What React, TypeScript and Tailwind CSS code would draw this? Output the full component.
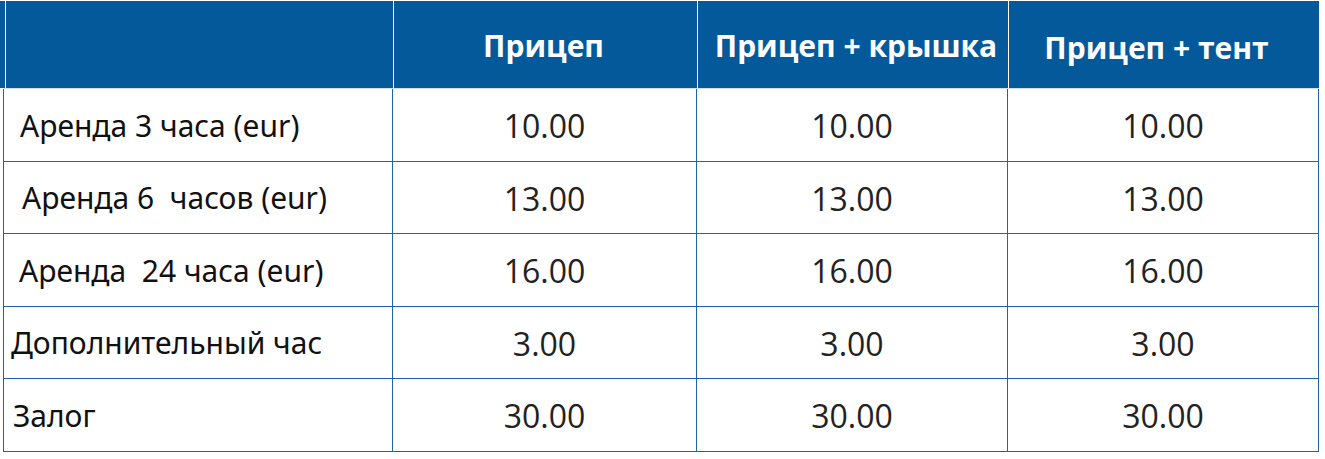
const headers = [
  { title: "Прицеп", cls: "pt-[2px] pr-[4px] border-r border-white" },
  { title: "Прицеп + крышка", cls: "pt-[2px] pl-[6px] border-r border-white" },
  { title: "Прицеп + тент", cls: "pt-[6px] pr-[16px]" },
];

const rows = [
  { label: "Аренда 3 часа (eur)", pad: "pl-[16px]", h: "h-[73px]", value: "10.00" },
  { label: "Аренда 6\u00a0 часов (eur)", pad: "pl-[18px]", h: "h-[72px]", value: "13.00" },
  { label: "Аренда\u00a0 24 часа (eur)", pad: "pl-[15px]", h: "h-[73px]", value: "16.00" },
  { label: "Дополнительный час", pad: "pl-[7px]", h: "h-[72px]", value: "3.00" },
  { label: "Залог", pad: "pl-[9px]", h: "h-[73px]", value: "30.00" },
];

export default function App() {
  return (
    <div className="min-h-screen bg-white pt-[1px]">
      <div className="w-[1319px] bg-[#03599a] pl-[5px]">
        <div className="grid h-[87px] grid-cols-[388px_304px_311px_311px] border-l border-white font-['Open_Sans',sans-serif] text-[30px] font-bold text-white">
          <div className="border-r border-white" />
          {headers.map((h) => (
            <div
              key={h.title}
              className={`flex items-center justify-center whitespace-nowrap ${h.cls}`}
            >
              {h.title}
            </div>
          ))}
        </div>
      </div>
      <div className="ml-[3px] w-[1316px] border-t border-[#cfe0ef]">
        {rows.map((row) => (
          <div
            key={row.label}
            className={`grid grid-cols-[390px_304px_311px_311px] border-b border-[#1f64a3] ${row.h}`}
          >
            <div
              className={`flex items-center whitespace-nowrap border-x border-[#1f64a3] font-['Noto_Sans',sans-serif] text-[30px] text-[#111] ${row.pad}`}
            >
              {row.label}
            </div>
            {[0, 1, 2].map((c) => (
              <div
                key={c}
                className="flex items-center justify-center border-r border-[#1f64a3] pt-[2px] font-['Open_Sans',sans-serif] text-[32px] text-[#222]"
              >
                {row.value}
              </div>
            ))}
          </div>
        ))}
      </div>
    </div>
  );
}
